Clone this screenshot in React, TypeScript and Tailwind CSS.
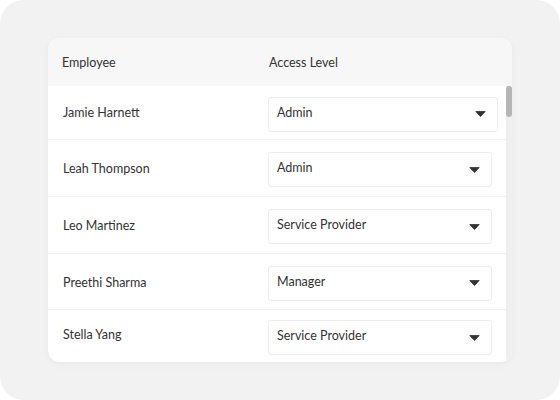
import React from 'react';

const rows = [
  { name: 'Jamie Harnett', level: 'Admin', h: 'h-[54px]', w: 'w-[230px]', nameFix: 'pb-[2px]' },
  { name: 'Leah Thompson', level: 'Admin', h: 'h-[57px]', w: 'w-[224px]', nameFix: '' },
  { name: 'Leo Martinez', level: 'Service Provider', h: 'h-[57px]', w: 'w-[224px]', nameFix: '' },
  { name: 'Preethi Sharma', level: 'Manager', h: 'h-[56px]', w: 'w-[224px]', nameFix: '' },
  { name: 'Stella Yang', level: 'Service Provider', h: 'h-[52px]', w: 'w-[224px]', nameFix: 'pb-[5px] pl-[14px]' },
];

function Caret() {
  return (
    <svg width="11" height="6" viewBox="0 0 11 6" className="shrink-0">
      <path d="M0.8 0.5 H10.2 L5.8 5.3 Q5.5 5.6 5.2 5.3 Z" fill="#333" stroke="#333" strokeWidth="0.8" strokeLinejoin="round" />
    </svg>
  );
}

export default function App() {
  return (
    <div className="w-[560px] h-[400px] bg-white" style={{ fontFamily: 'Lato, "Open Sans", sans-serif' }}>
      <div className="w-full h-full bg-[#f2f2f2] rounded-3xl pt-[38px] pl-[48px]">
        <div className="w-[464px] h-[324px] bg-white rounded-xl overflow-hidden shadow-[0_2px_10px_rgba(0,0,0,0.04)] flex flex-col">
          {/* header */}
          <div className="h-[48px] bg-[#f7f7f7] flex items-center pt-[2px] text-[12.5px] text-[#333]">
            <div className="w-[221px] pl-[14px]">Employee</div>
            <div>Access Level</div>
          </div>
          {/* body */}
          <div className="flex-1 flex">
            <div className="flex-1 flex flex-col">
              {rows.map((r, i) => (
                <div
                  key={r.name}
                  className={`${r.h} flex items-center pt-[3px] text-[12.5px] text-[#333] ${i < rows.length - 1 ? 'border-b border-[#f2f2f2]' : ''}`}
                >
                  <div className={`w-[220px] pl-[15px] ${r.nameFix}`}>{r.name}</div>
                  <div className={`${r.w} h-[35px] border border-[#ededed] rounded-[3px] flex items-center justify-between pl-[8px] pr-[11px]`}>
                    <span className="pb-[2px]">{r.level}</span>
                    <Caret />
                  </div>
                </div>
              ))}
            </div>
            {/* scrollbar */}
            <div className="w-[6px] bg-[#efefef]">
              <div className="h-[31px] bg-[#b5b5b5] rounded-[3px]" />
            </div>
          </div>
        </div>
      </div>
    </div>
  );
}
